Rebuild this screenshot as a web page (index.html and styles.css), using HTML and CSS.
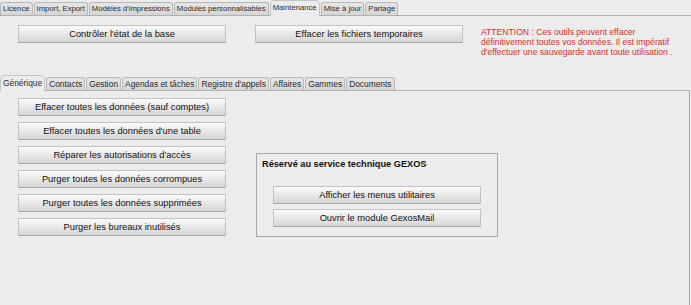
FILE: index.html
```html
<html>
  <head>
    <title>Maintenance</title>
    <link rel="stylesheet" href="styles.css">
  </head>
<body>

  <div class="tabbar top">
    <span class="tab">Licence</span>
    <span class="tab">Import, Export</span>
    <span class="tab">Modèles d'impressions</span>
    <span class="tab">Modules personnalisables</span>
    <span class="tab current">Maintenance</span>
    <span class="tab">Mise à jour</span>
    <span class="tab">Partage</span>
  </div>

  <div class="pane outer">
    <div class="toolbar">
      <button class="btn">Contrôler l'état de la base</button>
      <button class="btn">Effacer les fichiers temporaires</button>
      <p class="warning">ATTENTION : Ces outils peuvent effacer<br>définitivement toutes vos données. Il est impératif<br>d'effectuer une sauvegarde avant toute utilisation .</p>
    </div>

    <div class="tabbar inner">
      <span class="tab current">Générique</span>
      <span class="tab">Contacts</span>
      <span class="tab">Gestion</span>
      <span class="tab">Agendas et tâches</span>
      <span class="tab">Registre d'appels</span>
      <span class="tab">Affaires</span>
      <span class="tab">Gammes</span>
      <span class="tab">Documents</span>
    </div>

    <div class="pane inner">
      <div class="actions">
        <button class="btn">Effacer toutes les données (sauf comptes)</button>
        <button class="btn">Effacer toutes les données d'une table</button>
        <button class="btn">Réparer les autorisations d'accès</button>
        <button class="btn">Purger toutes les données corrompues</button>
        <button class="btn">Purger toutes les données supprimées</button>
        <button class="btn">Purger les bureaux inutilisés</button>
      </div>

      <div class="reserved">
        <div class="reserved-title">Réservé au service technique GEXOS</div>
        <div class="reserved-actions">
          <button class="btn">Afficher les menus utilitaires</button>
          <button class="btn">Ouvrir le module GexosMail</button>
        </div>
      </div>
    </div>
  </div>

</body>
</html>
```

FILE: styles.css
```css
html, body { margin: 0; height: 100%; }
body {
  display: flex;
  flex-direction: column;
  background: #ececec;
  font-family: "Liberation Sans", Arial, sans-serif;
  color: #111;
  overflow: hidden;
}

/* tab strips */
.tabbar { display: flex; align-items: flex-end; flex: none; }
.tabbar.top { height: 15px; }
.tabbar.inner { height: 15px; margin-top: 9px; }

.tab {
  display: block;
  box-sizing: border-box;
  height: 13px;
  line-height: 12px;
  padding: 0 2px;
  margin-right: 1px;
  border: 1px solid #b8b8b8;
  border-bottom: none;
  border-radius: 3px 3px 0 0;
  background: linear-gradient(#e6e6e6, #d6d6d6);
  color: #2a2a2a;
  white-space: nowrap;
}
.tabbar.top .tab { font-size: 7.7px; }
.tabbar.inner .tab { font-size: 8.4px; }

/* the selected tab sits over the pane's top border */
.tab.current {
  position: relative;
  height: 16px;
  margin-bottom: -1px;
  line-height: 14px;
  background: #ececec;
  border-color: #c4c4c4;
  border-radius: 5px 5px 0 0;
}

/* panes */
.pane { border-top: 1px solid #b0b0b0; }
.pane.outer {
  flex: 1;
  display: flex;
  flex-direction: column;
  min-height: 0;
}
.pane.inner {
  flex: 1;
  display: flex;
  align-items: flex-start;
  width: 690px;
  box-sizing: border-box;
  border-right: 1px solid #a8a8a8;
}

/* buttons */
.btn {
  display: block;
  box-sizing: border-box;
  width: 208px;
  height: 18px;
  padding: 0;
  margin: 0;
  border: 1px solid #c2c2c2;
  border-bottom-color: #a6a6a6;
  border-radius: 1px;
  background: linear-gradient(#fbfbfb, #e9e9e9 45%, #d6d6d6);
  font-family: "Liberation Sans", Arial, sans-serif;
  font-size: 9.3px;
  color: #111;
  text-align: center;
}

.toolbar {
  display: flex;
  align-items: flex-start;
  flex: none;
  padding: 9px 0 0 18px;
  height: 50px;
  box-sizing: border-box;
}
.toolbar .btn + .btn { margin-left: 29px; }

.warning {
  margin: 2px 0 0 18px;
  font-size: 8.6px;
  line-height: 10px;
  color: #de2b2b;
}

.actions {
  display: flex;
  flex-direction: column;
  gap: 6px;
  padding: 7px 0 0 18px;
}

.reserved {
  margin: 62px 0 0 30px;
  width: 242px;
  height: 84px;
  box-sizing: border-box;
  border: 1px solid #a9a9a9;
  padding: 5px 0 0 5px;
}
.reserved-title { font-size: 9.2px; font-weight: bold; line-height: 11px; }
.reserved-actions {
  display: flex;
  flex-direction: column;
  gap: 5px;
  padding: 16px 0 0 11px;
}
```
